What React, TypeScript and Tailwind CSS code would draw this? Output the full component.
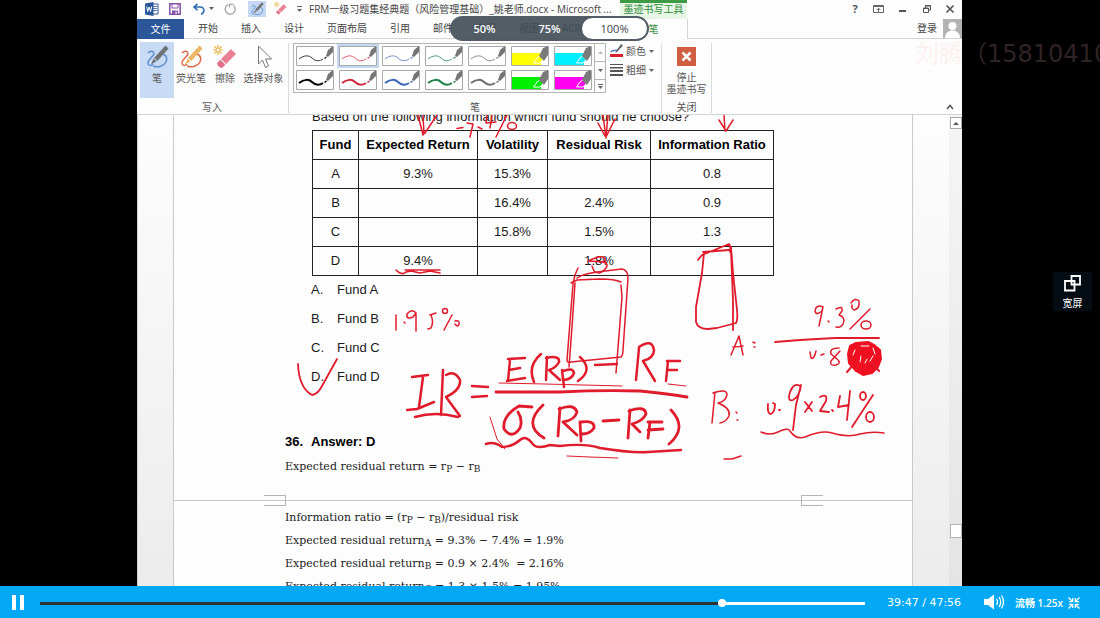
import React, { useState } from "react";

const UI = "font-['Open_Sans','Noto_Sans_CJK_SC',sans-serif]";

function PenIcon({ size, pen = "#6f7377", ring = "#5b8fd0" }: { size: number; pen?: string; ring?: string }) {
  return (
    <svg width={size} height={size} viewBox="0 0 24 24" fill="none" aria-hidden="true">
      <path d="M3 8c3-3 6-2 6 1-1 3-6 5-6 9 0 3 3 3 5 1M16 9c5 0 7 4 5 8-2 4-8 6-13 4" stroke={ring} strokeWidth="1.500" />
      <path d="M20.500 .5l3 3L12.500 16l-3.500-3z" fill={pen} />
      <path d="M8.500 13.500l3 3-5.500 3z" fill={pen} />
    </svg>
  );
}

function EraserIcon({ size }: { size: number }) {
  return (
    <svg width={size} height={size} viewBox="0 0 24 24" fill="none" aria-hidden="true">
      <path d="M5 0v10M0 5h10M1.500 1.500l7 7M8.500 1.500l-7 7" stroke="#e9b24a" strokeWidth="1.200" />
      <circle cx="5" cy="5" r="2" fill="#fff" stroke="#e9b24a" />
      <path d="M18 4l5 5-10 10-5-5z" fill="#ea7f96" />
      <path d="M7.300 14.700l5 5-3 3c-2 1-6-3-5-5z" fill="#e0708a" />
    </svg>
  );
}

function Caret() {
  return (
    <svg width="5" height="3" viewBox="0 0 5 3" aria-hidden="true">
      <path d="M0 0h5L2.500 3z" fill="#666" />
    </svg>
  );
}

function TitleBar() {
  return (
    <header className="flex h-[19px] items-center">
      <div className="flex w-[172px] shrink-0 items-center pb-[2px] pl-2">
        <svg className="mr-[10px]" width="14" height="14" viewBox="0 0 14 14" aria-hidden="true">
          <path d="M7 2h6v10H7z" fill="#fff" stroke="#2b579a" />
          <path d="M8 4.500h4M8 6.500h4M8 8.500h4" stroke="#2b579a" strokeWidth=".8" />
          <path d="M0 1.500L8.500 0v14L0 12.500z" fill="#2b579a" />
          <path d="M1.700 4.500l1 5 1.400-4.500 1.400 4.500 1.200-5" fill="none" stroke="#fff" strokeWidth="1" />
        </svg>
        <button aria-label="保存" className="mr-3">
          <svg width="12" height="12" viewBox="0 0 12 12" fill="none">
            <path d="M.8.8h10.400v10.400H.8z" stroke="#8650a6" strokeWidth="1.500" />
            <path d="M3 1v4h6V1" stroke="#8650a6" />
            <path d="M3 7.500h6V11H3z" fill="#8650a6" />
            <path d="M6.500 8.500h1.200V11H6.500z" fill="#fff" />
          </svg>
        </button>
        <button aria-label="撤消" className="mr-[10px] flex items-center gap-1">
          <svg width="12" height="12" viewBox="0 0 12 12" fill="none">
            <path d="M4.500.8L1 4l3.500 3.200M1.200 4H7c5 0 5 6 1 7.200" stroke="#2f6cb5" strokeWidth="1.600" />
          </svg>
          <Caret />
        </button>
        <button aria-label="重复" className="mr-3">
          <svg width="12" height="12" viewBox="0 0 12 12" fill="none">
            <path d="M4 1.700A5 5 0 1 0 9.500 2.500M5.500 4.500V1.300h4" stroke="#a5a5a5" strokeWidth="1.300" />
          </svg>
        </button>
        <button aria-label="笔" className="flex h-4 w-[18px] items-center justify-center bg-[#c5d7f2]">
          <PenIcon size={14} />
        </button>
        <button aria-label="橡皮擦" className="ml-2">
          <EraserIcon size={13} />
        </button>
        <button aria-label="自定义快速访问工具栏" className="ml-[10px] flex flex-col gap-[2px]">
          <span className="h-px w-[5px] bg-[#666]" />
          <Caret />
        </button>
      </div>
      <h1 className="w-[311px] shrink-0 overflow-hidden whitespace-nowrap text-[10px] leading-[17px] text-[#444]">
        FRM一级习题集经典题（风险管理基础）_姚老师.docx - Microsoft ...
      </h1>
      <div className="h-[19px] w-[67px] shrink-0 border-t-[3px] border-[#3d9b45] bg-[#e6f6e5] text-center text-[10px] leading-[13px] text-[#2f8a38]">
        墨迹书写工具
      </div>
      <div className="flex flex-1 items-center justify-end gap-3 pb-[2px] pr-[7px] text-[#555]">
        <button aria-label="帮助" className="w-3 text-[11px] font-bold leading-4">?</button>
        <button aria-label="功能区显示选项">
          <svg width="12" height="10" viewBox="0 0 12 10" fill="none" stroke="#666">
            <path d="M.5 1.500h10v7H.5zM.5 2.500h10M5.500 8V4.500M3.700 6l1.800-1.800L7.300 6" />
          </svg>
        </button>
        <button aria-label="最小化">
          <svg width="12" height="10" viewBox="0 0 12 10"><path d="M2 6h7v2H2z" fill="#555" /></svg>
        </button>
        <button aria-label="还原">
          <svg width="12" height="10" viewBox="0 0 12 10" fill="none" stroke="#555">
            <path d="M2.500 4h5v4.500h-5zM2 4.500h6M4.500 4V1.500h5V6H8M4 2h6" />
          </svg>
        </button>
        <button aria-label="关闭">
          <svg width="10" height="10" viewBox="0 0 10 10" fill="none" stroke="#555" strokeWidth="1.700">
            <path d="M1.500 1.500l7 7M8.500 1.500l-7 7" />
          </svg>
        </button>
      </div>
    </header>
  );
}

function RibbonTabs() {
  const tabs = ["开始", "插入", "设计", "页面布局", "引用", "邮件", "审阅", "视图", "ACROBAT"];
  return (
    <nav className="flex h-5 text-[10px] leading-[19px] text-[#444]">
      <button className="w-[47px] shrink-0 bg-[#2b579a] text-white">文件</button>
      <div className="flex w-[436px] shrink-0 gap-[23px] overflow-hidden border-b border-[#d4d4d4] pl-[14px]">
        {tabs.map((t) => (
          <button key={t} className="shrink-0">{t}</button>
        ))}
      </div>
      <button className="w-[68px] shrink-0 border-r border-[#d4d4d4] text-[#2f8a38]">笔</button>
      <div className="flex flex-1 items-center justify-end gap-[6px] border-b border-[#d4d4d4]">
        <button>登录</button>
        <svg width="19" height="19" viewBox="0 0 19 19" aria-hidden="true">
          <path d="M0 0h19v19H0z" fill="#b3b3b3" />
          <circle cx="9.500" cy="7" r="4" fill="#fff" />
          <path d="M2 19c0-10 15-10 15 0z" fill="#fff" />
        </svg>
      </div>
    </nav>
  );
}

type Swatch = { color: string; width?: number; marker?: boolean };
const SWATCHES: Swatch[] = [
  { color: "#333", width: 1 },
  { color: "#e05a6a", width: 1 },
  { color: "#6f8fc8", width: 1 },
  { color: "#4e9a78", width: 1 },
  { color: "#8a8a8a", width: 1 },
  { color: "#ffff00", marker: true },
  { color: "#00f0ff", marker: true },
  { color: "#000", width: 2 },
  { color: "#cf2a3e", width: 2 },
  { color: "#3a66b5", width: 2 },
  { color: "#1f8048", width: 2 },
  { color: "#6e6e6e", width: 2 },
  { color: "#00f000", marker: true },
  { color: "#ff00f0", marker: true },
];

function SwatchCell({ s, selected }: { s: Swatch; selected: boolean }) {
  return (
    <button aria-label="笔样式" className={selected ? "bg-[#c5d7f2] p-[2px]" : "p-[2px]"}>
      <svg width="38" height="20" viewBox="0 0 38 20" fill="none">
        <path d="M.5.5h37v19H.5z" fill="#fff" stroke="#a8a8a8" />
        {s.marker ? (
          <>
            <path d="M1 7h29v12H1z" fill={s.color} />
            <path d="M22.500 17l3.500-5 4-3 2 5-3 3z" fill={s.color} stroke="#fff" />
            <path d="M37 0v9l-4 6-5-5 4-8z" fill="#7a7a7a" />
          </>
        ) : (
          <>
            <path d="M3 13C8 9 13 9 16 12c4 4 8 3 11 1" stroke={s.color} strokeWidth={s.width} />
            <path d="M28.500 12.500l2-1.500" stroke={s.color} strokeWidth="1.500" />
            <path d="M37 0v6l-5 5-2-1 2-6z" fill="#757575" />
          </>
        )}
      </svg>
    </button>
  );
}

function Ribbon() {
  const big = "flex h-14 flex-col items-center pt-[3px]";
  return (
    <section className="flex h-[76px] border-b border-[#d4d4d4] pt-[3px] text-[10px] leading-3 text-[#555]">
      <div className="my-px flex w-[152px] shrink-0 flex-col justify-between border-r border-[#dcdcdc] pl-[3px]">
        <div className="-mt-px flex">
          <button className={`${big} w-[34px] bg-[#c9daf4]`}>
            <PenIcon size={24} />
            <span className="mt-[3px]">笔</span>
          </button>
          <button className={`${big} w-[34px]`}>
            <PenIcon size={24} pen="#ecb766" ring="#dd6a4c" />
            <span className="mt-[3px]">荧光笔</span>
          </button>
          <button className={`${big} w-[34px]`}>
            <EraserIcon size={24} />
            <span className="mt-[3px]">擦除</span>
          </button>
          <button className={`${big} w-[43px]`}>
            <svg width="24" height="24" viewBox="0 0 24 24" fill="#fff" stroke="#777">
              <path d="M6.500 1v18l4-4 3 7.500 3-1.500-3-7h6z" />
            </svg>
            <span className="mt-[3px] whitespace-nowrap">选择对象</span>
          </button>
        </div>
        <div className="pr-1 text-center">写入</div>
      </div>
      <div className="my-px flex w-[373px] shrink-0 flex-col justify-between border-r border-[#dcdcdc] pl-1">
        <div className="flex">
          <div className="flex h-[50px] border border-[#b5b5b5]">
            <div className="grid grid-cols-7 content-start gap-x-px">
              {SWATCHES.map((s, i) => (
                <SwatchCell key={i} s={s} selected={i === 1} />
              ))}
            </div>
            <div className="flex w-[11px] flex-col border-l border-[#b5b5b5]">
              <button aria-label="上一行" className="flex h-[18px] items-center justify-center border-b border-[#b5b5b5]">
                <svg width="5" height="3" viewBox="0 0 5 3"><path d="M0 3h5L2.500 0z" fill="#bbb" /></svg>
              </button>
              <button aria-label="下一行" className="flex h-[18px] items-center justify-center border-b border-[#b5b5b5]">
                <Caret />
              </button>
              <button aria-label="更多" className="flex flex-1 flex-col items-center justify-center gap-px">
                <span className="h-px w-[5px] bg-[#666]" />
                <Caret />
              </button>
            </div>
          </div>
          <div className="ml-1 flex flex-col gap-[3px] whitespace-nowrap">
            <button className="flex h-4 items-center gap-[3px]">
              <svg width="13" height="14" viewBox="0 0 13 14" fill="none">
                <path d="M0 10h13v3H0z" fill="#d9202a" />
                <path d="M1 8c2-4 5 1 7-3" stroke="#4d7fc0" strokeWidth="1.500" />
                <path d="M11 0l2 1.500L7 8 5 9z" fill="#5f6368" />
              </svg>
              颜色
              <Caret />
            </button>
            <button className="flex h-4 items-center gap-[3px]">
              <svg width="13" height="12" viewBox="0 0 13 12" fill="#555">
                <path d="M0 0h13v1H0zM0 3h13v1.500H0zM0 6h13v2H0zM0 10h13v2H0z" />
              </svg>
              粗细
              <Caret />
            </button>
          </div>
        </div>
        <div className="pr-1 text-center">笔</div>
      </div>
      <div className="my-px flex w-[50px] shrink-0 flex-col justify-between border-r border-[#dcdcdc]">
        <button className="flex flex-col items-center pt-1">
          <svg width="19" height="19" viewBox="0 0 19 19" fill="none">
            <path d="M0 0h19v19H0z" fill="#cf5f40" />
            <path d="M5.500 5.500l8 8M13.500 5.500l-8 8" stroke="#fff" strokeWidth="2.500" />
          </svg>
          <span className="mt-[5px] whitespace-nowrap">停止<br />墨迹书写</span>
        </button>
        <div className="text-center">关闭</div>
      </div>
      <div className="flex flex-1 items-end justify-end pb-1 pr-2">
        <button aria-label="折叠功能区">
          <svg width="8" height="6" viewBox="0 0 8 6" fill="none"><path d="M1 5l3-3.500L7 5" stroke="#555" strokeWidth="1.500" /></svg>
        </button>
      </div>
    </section>
  );
}

const ROWS = [
  ["A", "9.3%", "15.3%", "", "0.8"],
  ["B", "", "16.4%", "2.4%", "0.9"],
  ["C", "", "15.8%", "1.5%", "1.3"],
  ["D", "9.4%", "", "1.8%", ""],
];

function Ink() {
  return (
    <svg
      className="pointer-events-none absolute left-0 top-0"
      width="738"
      height="470"
      viewBox="174 115 738 470"
      fill="none"
      stroke="#e01b2c"
      strokeLinecap="round"
      strokeLinejoin="round"
      aria-hidden="true"
    >
      <g strokeWidth="1.500">
        <path d="M418 115l5 20M423 115l1 19M437 115l-12 18" />
        <path d="M457 128.500l6-1M467 123l6 1-3 13M478 127l4 2M487 115l-1 8 10-1M492 116l-2 12M507 115l-11 22" />
        <ellipse cx="512" cy="126" rx="4.500" ry="3.500" />
        <path d="M603 115l3 23M608 115l-2 22M598 123l7 13M615 119l-9 18" />
        <path d="M724 115l1 16M719 120l7 11M733 120l-7 11" />
        <path d="M396 270Q402 276 406 272L411 271 420 273 430 271 440 273M405 270L440 270" />
        <path d="M590 260L598 257Q608 256 604 262L599 262Q610 262 606 268 600 276 594 271L592 266M588 261L606 262" />
        <path d="M578 268L575 275 573 284 567 360Q567 363 571 362L621 357Q623 355 623 350L628 278Q628 270 622 269L605 271Q584 273 577 278" />
        <path d="M571 283L577 280 600 279Q615 279 621 282M621 285L622 297 616 373M575 283L572 327 569 367" />
        <path d="M396 315v15M404 322l1 1M416 313Q412 308 407 314 406 320 413 317L416 313V331M430 315L436 313M431 315Q434 322 431 328L428 329M452 315L444 330" />
        <circle cx="445" cy="311" r="2.500" />
        <path d="M455 321q5-1 4 3t-4 0" />
        <path d="M731 355L739 336 743 355M733 347L743 346M753 342l2 1M754 347l1 0" />
        <path d="M823 307Q816 304 815 311 816 316 822 311L823 307 819 326M828 321l1 1M836 309Q843 305 842 311L839 315Q846 317 843 324 841 328 836 327M851 303Q855 297 859 301 860 309 854 310 851 308 852 305M870 309L850 329" />
        <ellipse cx="866" cy="325" rx="5" ry="4" />
        <path d="M810 352L811 358Q814 360 816 351M821 355L824 354M839 348Q829 348 831 354L837 359Q842 363 836 365 829 366 831 361L840 351" />
        <path d="M715 392L712 423M713 393Q727 388 727 395 725 402 718 403 731 408 729 416 726 422 720 423M736 412l1 1M737 420l1 0" />
        <path d="M761 432Q770 436 778 432 788 427 790 431 796 440 805 437 822 430 832 433 848 438 860 434 872 431 884 433" />
        <path d="M724 459L732 459 741 456" />
      </g>
      <g strokeWidth="1.800">
        <path d="M298 364Q299 388 312 395 318 394 322 386L337 359" />
        <path d="M698 260L702 255 729 244Q731 246 730 252M703 252L729 250M704 253L702 273 696 307V322Q698 329 708 329L717 328 736 323Q738 320 737 310L733 273 731 247" />
        <path d="M731 250L733 300V330" />
        <path d="M775 342L800 340 835 338 879 338" />
        <path d="M768 404Q767 414 771 414 775 412 775 404L773 403M779 410l1 0M800 386Q794 382 790 392 787 402 793 400 800 396 801 385L796 405 793 430M805 402L812 411M812 402L805 412M820 397Q828 393 826 401L820 411 829 412M832 410l1 1M840 396L838 407 849 405M850 391L847 420M873 395L852 427" />
        <ellipse cx="863" cy="396" rx="3" ry="4" />
        <ellipse cx="870" cy="417" rx="4" ry="5" />
      </g>
      <g strokeWidth="2.500">
        <path d="M412 377L428 375M423 377L419 407M407 410L417 409 434 402M415 417Q435 411 458 417M443 370L441 415M446 375Q455 370 460 380 461 390 446 397L460 416" />
        <path d="M472 386L488 387M472 397L487 396" />
        <path d="M508 359L525 358M510 360L508 381M509 370L520 368M507 381L525 378M541 354Q527 366 534 382M547 357L546 380M546 358Q560 355 559 362 556 368 549 370L560 380M562 370L564 387M563 371Q573 367 574 373 572 379 564 380M580 357Q594 370 578 381M595 365L617 364" />
        <path d="M639 348L636 380M639 347Q652 338 654 350 654 358 643 361L655 381M667 361L680 361M668 361L666 381M667 370L677 370" />
        <path d="M486 444Q494 441 502 447 512 447 520 440 526 435 532 443 536 450 550 445L560 446Q585 443 600 448 630 453 648 452L681 450" />
      </g>
      <g strokeWidth="2.800">
        <path d="M496 392L560 392Q600 390 640 391 670 394 687 397" />
        <path d="M532 407L519 406Q502 416 504 429 512 440 520 428 523 420 518 412M543 405Q522 425 544 438M560 408L558 436M559 409Q574 403 577 412 575 420 563 422L577 435M580 422L581 441M581 422Q595 420 594 428 590 434 582 434M603 421L619 420M630 410L628 438M629 411Q645 405 646 414 643 421 632 424L640 432M648 422L662 422M650 422L648 438M648 430L663 429M671 410Q688 428 669 444" />
      </g>
      <g strokeWidth="1">
        <path d="M499 383L545 384 622 386M668 384L686 386M490 417L497 439 505 449M567 456L590 457 618 458" />
      </g>
      <path d="M850 346l6-3 12-1 6 3 6 5 1 9-3 8-6 6-9 2-7-4-7-8-1-9z" fill="#ee1020" stroke="#ee1020" strokeWidth="2" />
      <path d="M847 372l6-7M879 371l-6-7" strokeWidth="2" />
      <path d="M855 350l-2 5M860 362l1-6M865 363l2-4M873 348l2 6M861 346l8 0M870 361l3-5" stroke="#fff" strokeWidth="1" />
    </svg>
  );
}

function PageBreak() {
  return (
    <div className="flex h-7 items-center pt-4">
      <span className="h-px w-[90px] bg-[#c6c6c6]" />
      <span className="flex h-[11px] w-[22px] items-center border-y border-r border-[#b5b5b5]">
        <span className="h-px w-full bg-[#c6c6c6]" />
      </span>
      <span className="h-px flex-1 bg-[#c6c6c6]" />
      <span className="flex h-[11px] w-[22px] items-center border-y border-l border-[#b5b5b5]">
        <span className="h-px w-full bg-[#c6c6c6]" />
      </span>
      <span className="h-px w-[89px] bg-[#c6c6c6]" />
    </div>
  );
}

function DocumentPage() {
  const math =
    "h-[23px] pl-[111px] font-['DejaVu_Serif',serif] text-[11px] leading-6 text-[#222] whitespace-nowrap [&_sub]:text-[9px]";
  return (
    <article className="relative flex-1 overflow-hidden border-x border-[#c9c9c9] bg-[#fdfdfd] font-['Liberation_Sans',sans-serif] text-[13px] text-[#1a1a1a]">
      <p className="-mt-[7px] h-[22px] pl-[138px] leading-[18px]">
        Based on the following information which fund should he choose?
      </p>
      <table className="ml-[138px] w-[461px] table-fixed border-collapse text-center">
        <colgroup>
          <col className="w-[46px]" />
          <col className="w-[119px]" />
          <col className="w-[70px]" />
          <col className="w-[103px]" />
          <col className="w-[123px]" />
        </colgroup>
        <thead>
          <tr className="h-[29px]">
            {["Fund", "Expected Return", "Volatility", "Residual Risk", "Information Ratio"].map((h) => (
              <th key={h} className="whitespace-nowrap border border-[#222] p-0 font-bold text-black">{h}</th>
            ))}
          </tr>
        </thead>
        <tbody>
          {ROWS.map((r) => (
            <tr key={r[0]} className="h-[29px]">
              {r.map((c, i) => (
                <td key={i} className="border border-[#222] p-0">{c}</td>
              ))}
            </tr>
          ))}
        </tbody>
      </table>
      <ul className="-mt-px pl-[137px] leading-[29px]">
        {["A", "B", "C", "D"].map((l) => (
          <li key={l} className="flex">
            <span className="w-[26px]">{l}.</span>
            <span>Fund {l}</span>
          </li>
        ))}
      </ul>
      <h2 className="mt-[38px] flex pl-[111px] font-bold leading-[26px] text-black">
        <span className="w-[26px]">36.</span>Answer: D
      </h2>
      <p className={math}>Expected residual return = r<sub>P</sub> − r<sub>B</sub></p>
      <PageBreak />
      <p className={math}>Information ratio = (r<sub>P</sub> − r<sub>B</sub>)/residual risk</p>
      <p className={math}>Expected residual return<sub>A</sub> = 9.3% − 7.4% = 1.9%</p>
      <p className={math}>Expected residual return<sub>B</sub> = 0.9 × 2.4% &nbsp;= 2.16%</p>
      <p className={math}>Expected residual return<sub>C</sub> = 1.3 × 1.5% = 1.95%</p>
      <Ink />
    </article>
  );
}

function ZoomPill() {
  const [level, setLevel] = useState("100%");
  return (
    <div className="absolute left-[313px] top-4 flex h-[25px] w-[199px] items-center rounded-full bg-[#3f4b54]/90 p-[2px] text-[11px] leading-none">
      {["50%", "75%", "100%"].map((z) => (
        <button
          key={z}
          onClick={() => setLevel(z)}
          className={
            z === level
              ? "h-full flex-1 rounded-full bg-white text-[#36424b]"
              : "h-full flex-1 rounded-full font-semibold text-white"
          }
        >
          {z}
        </button>
      ))}
    </div>
  );
}

function Player() {
  const total = 47 * 60 + 56;
  const [pos, setPos] = useState(39 * 60 + 47);
  const pct = (pos / total) * 100;
  const fmt = (s: number) => `${Math.floor(s / 60)}:${String(s % 60).padStart(2, "0")}`;
  return (
    <footer className={`flex h-8 shrink-0 items-center bg-[#03a9f5] text-white ${UI}`}>
      <button aria-label="暂停" className="ml-3 flex gap-1">
        <span className="h-[15px] w-[4px] bg-white" />
        <span className="h-[15px] w-[4px] bg-white" />
      </button>
      <input
        type="range"
        aria-label="播放进度"
        min={0}
        max={total}
        value={pos}
        onChange={(e) => setPos(Number(e.target.value))}
        style={{ backgroundImage: `linear-gradient(to right, #333 ${pct}%, #fff ${pct}%)` }}
        className="ml-4 mt-[2px] h-[3px] min-w-0 flex-1 appearance-none [&::-webkit-slider-thumb]:h-2 [&::-webkit-slider-thumb]:w-2 [&::-webkit-slider-thumb]:appearance-none [&::-webkit-slider-thumb]:rounded-full [&::-webkit-slider-thumb]:bg-white"
      />
      <span className="ml-[22px] mt-[2px] w-24 whitespace-nowrap font-['DejaVu_Sans',sans-serif] text-[11px]">
        {fmt(pos)} / {fmt(total)}
      </span>
      <button aria-label="音量">
        <svg width="22" height="16" viewBox="0 0 22 16" fill="none">
          <path d="M1 5h4l6-4.500v15L5 11H1z" fill="#fff" />
          <path d="M13.500 5q2 3 0 6M16 3q3.500 5 0 10M18.500 1.500q4 6.500 0 13" stroke="#fff" strokeWidth="1.300" />
        </svg>
      </button>
      <button className="ml-[10px] mt-[2px] w-[53px] whitespace-nowrap text-left text-[10px] font-semibold leading-4">流畅 1.25x</button>
      <button aria-label="退出全屏" className="mr-5 mt-[2px]">
        <svg width="12" height="12" viewBox="0 0 12 12" fill="none" stroke="#fff" strokeWidth="1.300">
          <path d="M.5.500l4 4M4.700 1v3.700H1M11.500.5l-4 4M7.300 1v3.700H11M.5 11.500l4-4M4.700 11V7.300H1M11.500 11.500l-4-4M7.300 11V7.300H11" />
        </svg>
      </button>
    </footer>
  );
}

export default function App() {
  return (
    <div className={`relative flex h-screen flex-col overflow-hidden bg-black ${UI}`}>
      <main className="relative ml-[137px] mr-[138px] flex min-h-0 flex-1 flex-col bg-[#fdfdfd]">
        <TitleBar />
        <RibbonTabs />
        <Ribbon />
        <div className="flex min-h-0 flex-1 bg-linear-to-b from-[#fdfdfd] to-[#ececec]">
          <div className="w-9 border-l border-[#d0d0d0]" />
          <DocumentPage />
          <div className="w-9" />
          <div className="flex w-[13px] flex-col items-center justify-between bg-black/3 pb-12 pt-[2px]">
            <button aria-label="向上滚动" className="flex h-3 w-3 items-center justify-center border border-[#aaa] bg-white">
              <svg width="6" height="3" viewBox="0 0 6 3"><path d="M0 3h6L3 0z" fill="#555" /></svg>
            </button>
            <span className="h-[14px] w-3 border border-[#b5b5b5] bg-white" />
          </div>
        </div>
        <ZoomPill />
      </main>
      <Player />
      <div className="pointer-events-none absolute left-[915px] right-0 top-9 overflow-hidden whitespace-nowrap font-['DejaVu_Sans','Noto_Sans_CJK_SC',sans-serif] text-[24px] leading-9 text-[#ffbcbc]/20">
        刘腾（15810410
      </div>
      <button className="absolute right-2 top-[272px] flex h-[39px] w-[39px] flex-col items-center justify-between bg-[#040d13] pb-px pt-[3px] text-[10px] leading-[14px] text-white">
        <svg width="17" height="17" viewBox="0 0 17 17" fill="none" stroke="#fff" strokeWidth="1.800">
          <path d="M1 6h9.500v9.500H1zM7.500 1h8.500v8.500H7.500z" />
        </svg>
        宽屏
      </button>
    </div>
  );
}
